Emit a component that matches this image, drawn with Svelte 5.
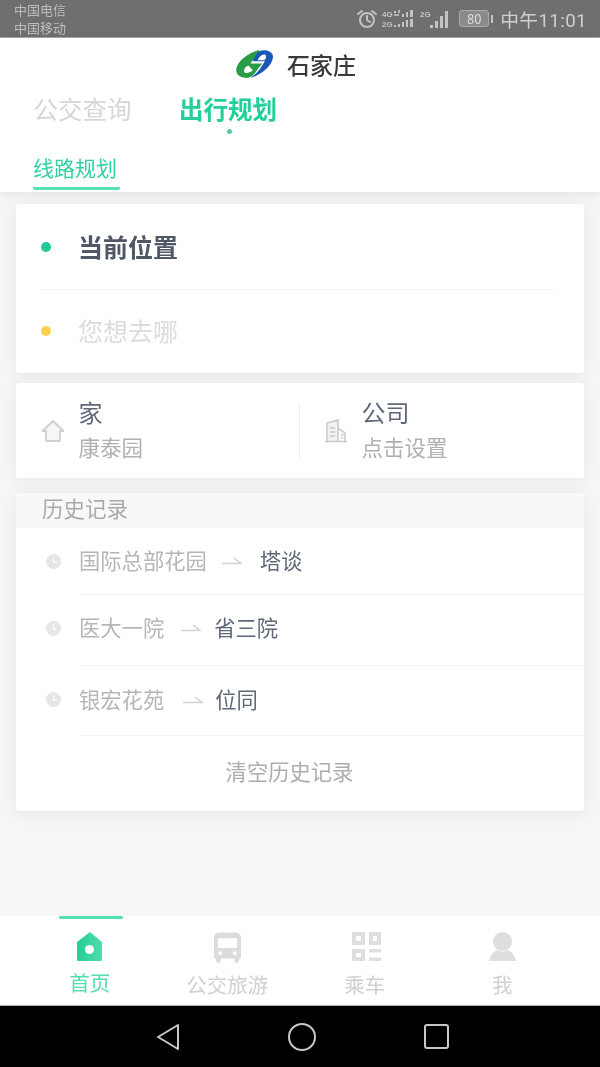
<script>
  const history = [
    { from: '国际总部花园', to: '塔谈', cls: 'r1' },
    { from: '医大一院', to: '省三院', cls: 'r2' },
    { from: '银宏花苑', to: '位同', cls: 'r3' }
  ];
</script>

<div class="page">
  <div class="status">
    <div class="carriers"><span>中国电信</span><span>中国移动</span></div>
    <div class="sysicons">
      <svg class="s-alarm" width="22" height="20" viewBox="0 0 22 20" fill="none" stroke="#c4c4c4" stroke-width="2"><circle cx="11" cy="11" r="7"/><path d="M11 7v4l3 2M2 5l4-3M20 5l-4-3" stroke-linecap="round"/></svg>
      <svg class="s-sig" width="33" height="20" viewBox="0 0 33 20" fill="#c4c4c4" font-size="8" font-weight="700" font-family="Liberation Sans"><text x="0" y="8">4G</text><text x="0" y="18">2G</text><rect x="12" y="2" width="2" height="2"/><rect x="12" y="5" width="5" height="2" opacity=".8"/><rect x="16" y="1" width="2" height="3" opacity=".8"/><rect x="12" y="16" width="2" height="2"/><rect x="16" y="15" width="2" height="3"/><rect x="20" y="5" width="2" height="3"/><rect x="20" y="13" width="2" height="5"/><rect x="24" y="3" width="2" height="5"/><rect x="24" y="11" width="2" height="7"/><rect x="28" y="1" width="3" height="7"/><rect x="28" y="10" width="3" height="8"/></svg>
      <svg class="s-sig2" width="30" height="20" viewBox="0 0 30 20" fill="#c4c4c4" font-size="8" font-weight="700" font-family="Liberation Sans"><text x="0" y="8">2G</text><rect x="10" y="16" width="3" height="3"/><rect x="15" y="12" width="3" height="7"/><rect x="20" y="7" width="3" height="12"/><rect x="25" y="2" width="3" height="17"/></svg>
      <div class="battery"><span class="cell">80</span><i class="nub"></i></div>
      <span class="time">中午11:01</span>
    </div>
  </div>

  <header class="head">
    <div class="city">
      <svg class="logo" width="37" height="28" viewBox="0 0 110 83">
        <path d="M68 0C40 8 8 28 1 55C-2 72 12 83 32 83C45 83 55 72 62 60L78 40H43C50 28 60 22 72 18Z" fill="#2a9c46"/>
        <path d="M24 62C24 54 30 48 37 46L50 60C44 66 30 70 27 68C25 67 24 65 24 62Z" fill="#fff"/>
        <path d="M72 2C90-3 110 4 110 20C108 50 70 75 44 83C60 70 70 60 76 48L86 33H50C55 20 62 8 72 2Z" fill="#1858b8"/>
        <path d="M68 24C72 18 80 12 87 14C92 17 88 28 84 30H64Z" fill="#fff"/>
      </svg>
      <span>石家庄</span>
    </div>
    <div class="tabs">
      <span class="tab">公交查询</span>
      <span class="tab on">出行规划<i class="dot"></i></span>
    </div>
    <div class="subtabs"><span class="sub">线路规划</span></div>
  </header>

  <main class="body">
    <section class="card route">
      <div class="loc first"><i class="pt green"></i><b>当前位置</b></div>
      <div class="rule"></div>
      <div class="loc second"><i class="pt yellow"></i><span>您想去哪</span></div>
    </section>

    <section class="card places">
      <div class="place home">
        <svg class="pic" width="24" height="24" viewBox="0 0 24 24" fill="#f6f6f6" stroke="#d0d0d0" stroke-width="1.8" stroke-linejoin="round"><path d="M12 2 1.500 12H5v10h14V12h3.500z"/></svg>
        <div class="words"><div class="name">家</div><div class="desc">康泰园</div></div>
      </div>
      <div class="vr"></div>
      <div class="place work">
        <svg class="pic" width="24" height="24" viewBox="0 0 24 24" fill="#f2f2f2" stroke="#cacaca" stroke-width="1.500"><path d="M3 22V4l11-3v21M14 9l7 5v8M1 22.500h22M6 9h5M6 13h5M6 17h5M17 16h2M17 19h2"/></svg>
        <div class="words"><div class="name">公司</div><div class="desc">点击设置</div></div>
      </div>
    </section>

    <section class="card hist">
      <div class="hist-title">历史记录</div>
      {#each history as h}
        <div class="hrow {h.cls}">
          <svg class="clock" width="15" height="15" viewBox="0 0 14 14"><circle cx="7" cy="7" r="7" fill="#e6e6e6"/><path d="M7 3.500V7.500h3" fill="none" stroke="#fff" stroke-width="1.200"/></svg>
          <span class="from">{h.from}</span>
          <svg class="arrow" width="20" height="8" viewBox="0 0 20 8" fill="none" stroke="#d2d2d2" stroke-width="1.500"><path d="M0 6.500h19L12 1"/></svg>
          <span class="to">{h.to}</span>
        </div>
      {/each}
      <div class="clear">清空历史记录</div>
    </section>
  </main>

  <nav class="tabbar">
    <i class="indicator"></i>
    <div class="item active">
      <svg width="28" height="29" viewBox="0 0 28 29"><defs><linearGradient id="hg" x1="0" x2="1"><stop offset="0" stop-color="#26cf95"/><stop offset="1" stop-color="#4fdcae"/></linearGradient></defs><path d="M14 0 26 10v18a1 1 0 0 1-1 1H2a1 1 0 0 1-1-1V10z" fill="url(#hg)"/><circle cx="13.500" cy="17.500" r="4.500" fill="#fff"/></svg>
      <span>首页</span>
    </div>
    <div class="item">
      <svg class="bus" width="27" height="31" viewBox="0 0 28 31" fill="#dcdcdc"><path d="M6 0h16c3 0 6 2 6 5v20c0 1-1 2-2 2v2a2 2 0 0 1-5 0v-2H7v2a2 2 0 0 1-5 0v-2c-1 0-2-1-2-2V5c0-3 3-5 6-5z"/><rect x="4" y="6" width="20" height="10" rx="1" fill="#fff"/><circle cx="6.500" cy="21.500" r="2" fill="#fff"/><circle cx="21.500" cy="21.500" r="2" fill="#fff"/></svg>
      <span>公交旅游</span>
    </div>
    <div class="item">
      <svg class="qr" width="29" height="29" viewBox="0 0 29 29" fill="#dedede"><path fill-rule="evenodd" d="M0 0h13v13H0zM4 4v5h5V4zM17 0h12v13H17zM21 4v5h4V4zM0 17h13v12H0zM4 21v4h5v-4z"/><rect x="17" y="17" width="12" height="3.500"/><rect x="17" y="25.500" width="12" height="3.500"/></svg>
      <span>乘车</span>
    </div>
    <div class="item">
      <svg width="27" height="29" viewBox="0 0 27 29" fill="#dedede"><circle cx="13.500" cy="9.500" r="9.500"/><path d="M9 18c-5 1-8 6-9 11h27c-1-5-4-10-9-11-3 2-6 2-9 0z"/></svg>
      <span>我</span>
    </div>
  </nav>

  <div class="android">
    <svg width="24" height="28" viewBox="0 0 24 28" fill="none" stroke="#c8c8c8" stroke-width="2" stroke-linejoin="round"><path d="M22 2 2 14l20 12z"/></svg>
    <svg width="28" height="28" viewBox="0 0 28 28" fill="none" stroke="#c8c8c8" stroke-width="2"><circle cx="14" cy="14" r="13"/></svg>
    <svg width="26" height="26" viewBox="0 0 26 26" fill="none" stroke="#c8c8c8" stroke-width="2"><rect x="1" y="1" width="23" height="23" rx="2"/></svg>
  </div>
</div>

<style>
  :global(body) { margin: 0; background: #f6f6f7; }
  .page {
    width: 600px; height: 1067px; display: flex; flex-direction: column; overflow: hidden;
    font-family: "Noto Sans CJK SC", "Noto Sans", sans-serif; background: #f6f6f7;
    filter: blur(.35px);
  }
  i { display: block; }

  .status {
    height: 37px; background: #6f6f6f; border-bottom: 1px solid #a8a8a8; flex: none;
    display: flex; justify-content: space-between; align-items: center; padding: 0 13px 0 14px;
  }
  .carriers { display: flex; flex-direction: column; font-size: 13px; line-height: 18px; color: #bdbdbd; }
  .sysicons { display: flex; align-items: center; }
  .s-sig { margin-left: 4px; }
  .s-sig2 { margin-left: 5px; }
  .battery { display: flex; align-items: center; gap: 2px; margin-left: 9px; }
  .cell { width: 28px; height: 15px; border: 1px solid #aaa; border-radius: 3px; background: #8a8a8a; color: #ddd; font-size: 13px; line-height: 15px; text-align: center; box-sizing: content-box; }
  .nub { width: 2px; height: 8px; background: #c4c4c4; }
  .time { font-family: Roboto, "Noto Sans CJK SC", sans-serif; font-size: 18.700px; color: #cfcfcf; margin-left: 7px; letter-spacing: .4px; }

  .head { height: 154px; background: #fff; box-shadow: 0 2px 10px rgba(0,0,0,.08); flex: none; position: relative; }
  .city { height: 52px; display: flex; justify-content: center; align-items: center; gap: 14px; padding: 0 8px 1px 0; box-sizing: border-box; font-size: 23px; color: #3a3a3a; font-weight: 500; }
  .tabs { display: flex; gap: 47.500px; padding-left: 33.500px; height: 36px; margin-top: 1px; align-items: center; font-size: 24.500px; }
  .tab { color: #d6d6d6; position: relative; line-height: 36px; }
  .tab.on { color: #25cf9a; font-weight: 700; }
  .dot { position: absolute; width: 5px; height: 5px; border-radius: 50%; background: #5acb9d; left: 48px; top: 38px; }
  .subtabs { padding-left: 33px; margin-top: 25px; }
  .sub { display: inline-block; font-size: 21px; line-height: 30px; color: #2fd3a0; padding: 0 3px 5px 0; border-bottom: 3px solid #57e0b6; border-radius: 0 0 2px 2px; }

  .body { flex: 1; padding: 12px 16px 0; display: flex; flex-direction: column; min-height: 0; }
  .card { background: #fff; border-radius: 4px; box-shadow: 0 2px 16px rgba(60,60,90,.08); }
  .route { height: 169px; margin-bottom: 10px; }
  .loc { display: flex; align-items: center; height: 85px; padding: 0 0 2px 25px; font-size: 25px; box-sizing: border-box; }
  .second { height: 83px; padding-bottom: 4px; }
  .loc b { font-weight: 700; color: #505868; margin-left: 27px; }
  .loc span { color: #dcdcdc; margin-left: 27px; }
  .pt { width: 10px; height: 10px; border-radius: 50%; margin-top: 2px; }
  .green { background: #20c997; }
  .yellow { background: #fbd24e; }
  .rule { height: 1px; background: #f0f0f0; margin: 0 30px 0 24px; }

  .places { height: 95px; display: flex; align-items: center; margin-bottom: 15px; }
  .place { display: flex; align-items: center; }
  .home { width: 283px; padding-left: 25px; box-sizing: border-box; }
  .work { padding-left: 24px; }
  .pic { flex: none; }
  .words { margin: -2px 0 0 13.500px; }
  .vr { width: 1px; height: 56px; background: #eeeeee; }
  .name { font-size: 24px; line-height: 32px; color: #5f6878; }
  .desc { font-size: 21.500px; line-height: 32px; color: #aeb0b4; margin-top: 3px; }

  .hist { height: 318px; overflow: hidden; display: flex; flex-direction: column; }
  .hist-title { height: 35px; line-height: 30px; background: #f8f8f9; padding-left: 26px; font-size: 21.500px; color: #a9a9ab; flex: none; }
  .hrow { display: flex; align-items: center; padding-left: 30px; font-size: 21.300px; position: relative; flex: none; box-sizing: border-box; }
  .hrow::after { content: ""; position: absolute; left: 65px; right: 0; bottom: 0; height: 1px; background: #f0f0f0; }
  .r1 { height: 67px; padding-bottom: 4px; }
  .r2 { height: 71px; padding-bottom: 8px; }
  .r3 { height: 70px; padding-bottom: 6px; }
  .clock { flex: none; margin-top: 3px; }
  .from { margin-left: 18px; color: #b4b6b9; }
  .arrow { flex: none; margin-top: 3px; }
  .r1 .arrow { margin-left: 15px; margin-right: 18px; }
  .r2 .arrow { margin-left: 17px; margin-right: 13px; }
  .r3 .arrow { margin-left: 19px; margin-right: 12px; }
  .to { color: #5f6878; }
  .clear { flex: 1; display: flex; align-items: center; justify-content: center; font-size: 21.300px; color: #adadaf; padding: 0 21px 6px 0; }

  .tabbar { height: 89px; background: #fff; flex: none; position: relative; display: grid; grid-template-columns: repeat(4, 137.500px); padding-left: 21px; border-bottom: 1px solid #b0b0b0; }
  .indicator { position: absolute; left: 59px; top: 0; width: 64px; height: 3px; border-radius: 2px; background: #4fe0b4; }
  .item { display: flex; flex-direction: column; align-items: center; padding-top: 16px; font-size: 20.500px; color: #d0d0d0; box-sizing: border-box; height: 89px; }
  .item svg { display: block; flex: none; }
  .item span { line-height: 30px; margin-top: 8px; }
  .item .bus { margin-bottom: -2px; }
  .item .qr { margin-left: 3px; }
  .active { color: #55ddb2; }
  .active span { margin-top: 6px; }

  .android { height: 61px; background: #000; flex: none; display: grid; grid-template-columns: 24px 28px 26px; gap: 108px; padding-left: 156px; align-items: center; box-sizing: border-box; }
  .android svg { display: block; }
</style>
